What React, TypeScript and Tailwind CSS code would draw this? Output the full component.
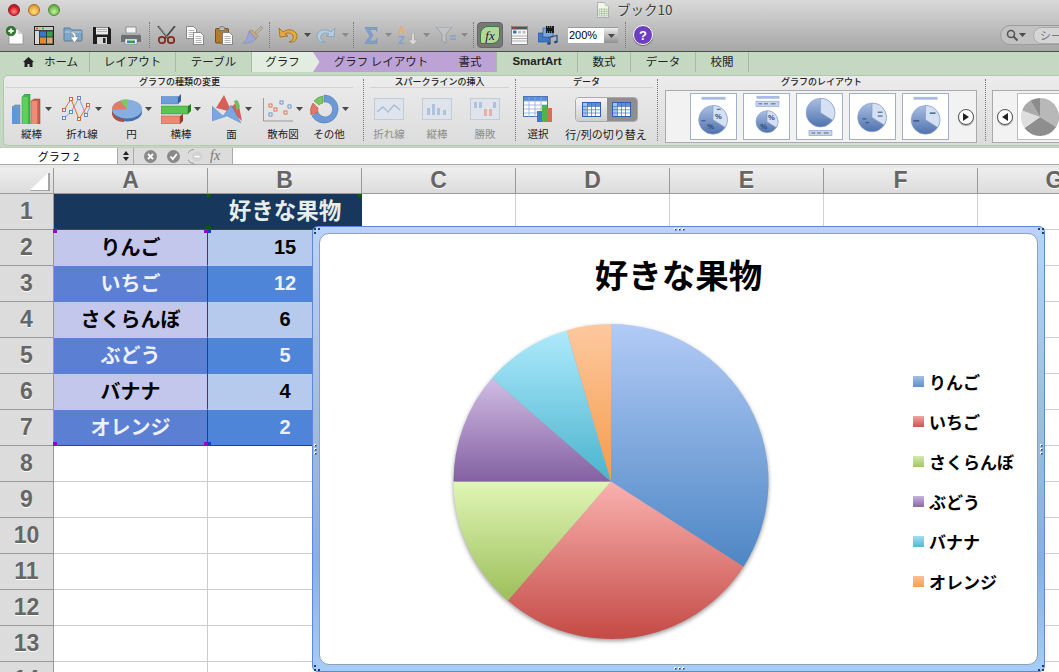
import React from "react";

const slices = [
  { v: 15, id: "s0", a: "#b2cbf6", b: "#4d86c4" },
  { v: 12, id: "s1", a: "#fab2b0", b: "#c44a45" },
  { v: 6, id: "s2", a: "#e0f6b6", b: "#9dbf5a" },
  { v: 5, id: "s3", a: "#d0bde4", b: "#8460a2" },
  { v: 4, id: "s4", a: "#aeeafc", b: "#4ab3ce" },
  { v: 2, id: "s5", a: "#fdc9a0", b: "#f69b4b" },
];

function wedge(cx: number, cy: number, r: number, from: number, to: number) {
  const p = (d: number) => {
    const t = ((d - 90) * Math.PI) / 180;
    return `${(cx + r * Math.cos(t)).toFixed(2)} ${(cy + r * Math.sin(t)).toFixed(2)}`;
  };
  return `M${cx} ${cy}L${p(from)}A${r} ${r} 0 ${to - from > 180 ? 1 : 0} 1 ${p(to)}Z`;
}

function Pie() {
  let acc = 0;
  const total = 44;
  return (
    <svg width="332" height="332" viewBox="0 0 332 332" className="shrink-0 drop-shadow-[0_2px_2px_rgba(0,0,0,0.4)]">
      <defs>
        {slices.map((s) => (
          <linearGradient key={s.id} id={s.id} x1="0" y1="0" x2="0" y2="1">
            <stop offset="0" stopColor={s.a} />
            <stop offset="1" stopColor={s.b} />
          </linearGradient>
        ))}
      </defs>
      {slices.map((s) => {
        const from = (acc / total) * 360;
        acc += s.v;
        const to = (acc / total) * 360;
        return <path key={s.id} d={wedge(166, 158.5, 157.5, from, to)} fill={`url(#${s.id})`} />;
      })}
    </svg>
  );
}

const Caret = ({ faded }: { faded?: boolean }) => (
  <svg width="7" height="4" viewBox="0 0 7 4" className="shrink-0">
    <path d="M0 0h7L3.5 4z" fill={faded ? "#8a8a8a" : "#4a4a4a"} />
  </svg>
);

const Sep = ({ cls }: { cls: string }) => <div className={`h-[26px] w-0 border-l border-dotted border-[#777] ${cls}`} />;

function NewIcon() {
  return (
    <svg width="18" height="19" viewBox="0 0 18 19">
      <path d="M3 3h9l5 5v10H3z" fill="#fbfbfb" stroke="#8a8a8a" strokeWidth=".7" />
      <path d="M12 3l5 5h-5z" fill="#d5d5d5" />
      <circle cx="5" cy="5" r="4.8" fill="#2f7d2a" stroke="#173f14" strokeWidth=".5" />
      <path d="M5 2.4v5.2M2.4 5h5.2" stroke="#fff" strokeWidth="1.8" />
    </svg>
  );
}
function GalleryIcon() {
  return (
    <svg width="20" height="19" viewBox="0 0 20 19">
      <rect x=".5" y=".5" width="19" height="18" fill="#3a3f46" stroke="#222" />
      <rect x="1" y="1" width="18" height="3" fill="#c9c9c9" />
      <circle cx="3" cy="2.5" r="1" fill="#d33" /><circle cx="6" cy="2.5" r="1" fill="#dc3" /><circle cx="9" cy="2.5" r="1" fill="#3a3" />
      <rect x="1" y="5" width="4" height="13" fill="#d8d8d8" />
      <rect x="6" y="5.5" width="6" height="5" fill="#2d7ccf" /><rect x="13" y="5.5" width="5.5" height="5" fill="#3aa24a" />
      <rect x="6" y="11.5" width="6" height="6" fill="#e38a2e" /><rect x="13" y="11.5" width="5.5" height="6" fill="#d9a96b" />
    </svg>
  );
}
function OpenIcon() {
  return (
    <svg width="20" height="18" viewBox="0 0 20 18">
      <path d="M1 2h6l2 2h9a1 1 0 0 1 1 1v9a1 1 0 0 1-1 1H2a1 1 0 0 1-1-1z" fill="#7ea6c9" stroke="#4d708f" strokeWidth=".8" />
      <path d="M1.5 6h17" stroke="#b6d0e6" />
      <path d="M7 6c4-.5 6 1.5 6 5h2.5l-4 6-4-6H11c0-2-1.5-3.5-4-5z" fill="#fff" stroke="#777" strokeWidth=".5" />
    </svg>
  );
}
function SaveIcon() {
  return (
    <svg width="18" height="18" viewBox="0 0 18 18">
      <path d="M0 1h16l2 2v15H0z" fill="#1e1e1e" />
      <rect x="3" y="1.5" width="12" height="7" fill="#e9e9e9" />
      <path d="M4 3.5h10M4 5.5h10" stroke="#999" strokeWidth=".7" />
      <rect x="4" y="11" width="10" height="7" fill="#d5d5d5" />
      <rect x="10" y="12" width="2.5" height="5" fill="#222" />
    </svg>
  );
}
function PrintIcon() {
  return (
    <svg width="20" height="19" viewBox="0 0 20 19">
      <path d="M5 1h10v6H5z" fill="#f4f4f4" stroke="#777" strokeWidth=".7" />
      <path d="M2 7h16l2 3v6H0v-6z" fill="#6c7074" />
      <path d="M2 7h16l1 2H1z" fill="#a8adb1" />
      <rect x="4" y="13" width="12" height="5" fill="#f5f5f5" stroke="#777" strokeWidth=".5" />
      <path d="M6 14.5h3v2.5h-3z" fill="#2f7fce" /><path d="M9 14.5h3v2.5H9z" fill="#3aa04a" /><path d="M12 14.5h2v2.5h-2z" fill="#2f7fce" />
    </svg>
  );
}
function CutIcon() {
  return (
    <svg width="19" height="18" viewBox="0 0 19 18">
      <path d="M1 0l10.5 13M18 0L7.5 13" stroke="#4a4a4a" strokeWidth="1.8" />
      <path d="M2 1l9 11" stroke="#c7c7c7" strokeWidth=".6" />
      <circle cx="5" cy="14" r="3.2" fill="none" stroke="#8a2c1d" strokeWidth="1.8" />
      <circle cx="14" cy="14" r="3.2" fill="none" stroke="#8a2c1d" strokeWidth="1.8" />
    </svg>
  );
}
const PageLines = ({ x, y }: { x: number; y: number }) => (
  <g>
    <path d={`M${x} ${y}h7l3 3v9h-10z`} fill="#fbfbfb" stroke="#666" strokeWidth=".7" />
    <path d={`M${x + 2} ${y + 4}h6M${x + 2} ${y + 6}h6M${x + 2} ${y + 8}h6M${x + 2} ${y + 10}h6`} stroke="#888" strokeWidth=".6" />
  </g>
);
function CopyIcon() {
  return (
    <svg width="18" height="19" viewBox="0 0 18 19">
      <PageLines x={0.5} y={0.5} />
      <PageLines x={7.5} y={6.5} />
    </svg>
  );
}
function PasteIcon() {
  return (
    <svg width="18" height="19" viewBox="0 0 18 19">
      <rect x=".5" y="2.5" width="13" height="14.5" rx="1" fill="#b27c30" stroke="#5c3f14" strokeWidth=".8" />
      <path d="M4 3.5c0-2 1-3 3-3s3 1 3 3v1H4z" fill="#bbb" stroke="#555" strokeWidth=".6" />
      <PageLines x={7.5} y={6.5} />
    </svg>
  );
}
function BrushIcon() {
  return (
    <svg width="20" height="18" viewBox="0 0 20 18">
      <path d="M12 6l6-6 2 2-6 6z" fill="#b9b3a5" stroke="#8d8779" strokeWidth=".5" />
      <path d="M6 5l3-1 6 6-2 3z" fill="#c9ab7a" stroke="#8f7a58" strokeWidth=".5" />
      <path d="M6 5l7 8c-3 3-8 4.5-13 4.5C3 15 5 10 6 5z" fill="#9da5d8" stroke="#7d84b3" strokeWidth=".5" />
    </svg>
  );
}
function ArrowIcon({ color, dark, flip }: { color: string; dark: string; flip?: boolean }) {
  return (
    <svg width="20" height="16" viewBox="0 0 20 16" className={flip ? "-scale-x-100" : ""}>
      <path d="M1 1l1 9 8-1-3-2c3-2 7-1 8 2s-1 5-4 6h4c4-2 5-6 3-9-3-4-9-4-13-1L2 2z" fill={color} stroke={dark} strokeWidth=".8" />
    </svg>
  );
}
function SigmaIcon() {
  return (
    <svg width="13" height="17" viewBox="0 0 13 17">
      <path d="M0 0h12v4.5l-1-2H4.5L8 8l-4 6h7l1-2.5V17H0v-1l5-7L0 1z" fill="#7fa0d0" stroke="#5d7fb3" strokeWidth=".4" />
    </svg>
  );
}
function SortIcon() {
  return (
    <div className="relative w-[20px] h-[19px] font-['Liberation_Sans',sans-serif] font-bold leading-none text-[11px]">
      <span className="absolute left-0 top-[-1px] text-[#e2b070]">A</span>
      <span className="absolute left-0 top-[9px] text-[#7f9fd0]">Z</span>
      <svg width="10" height="12" viewBox="0 0 10 12" className="absolute right-0 top-[7px]">
        <path d="M3.5 0h3v7H10l-5 5-5-5h3.5z" fill="#d8d8d8" stroke="#9c9c9c" strokeWidth=".6" />
      </svg>
    </div>
  );
}
function FilterIcon() {
  return (
    <svg width="21" height="17" viewBox="0 0 21 17">
      <path d="M0 0h16L10 7v9l-4-2V7z" fill="#bfc4c8" stroke="#8f9498" strokeWidth=".7" />
      <path d="M14 9h6M14 12h6" stroke="#7fa0d0" strokeWidth="1.6" />
    </svg>
  );
}
function SheetIcon() {
  return (
    <svg width="17" height="19" viewBox="0 0 17 19">
      <rect x=".5" y=".5" width="16" height="18" fill="#f8f8f8" stroke="#666" strokeWidth=".7" />
      <rect x="1" y="1" width="15" height="2.5" fill="#555" />
      <rect x="2" y="4.5" width="3.5" height="3" fill="#3e73c4" /><rect x="7" y="5" width="3" height="2.5" fill="#bbb" /><rect x="11.5" y="5" width="3" height="2.5" fill="#bbb" />
      <path d="M1 10h15M1 12.5h15M1 15h15" stroke="#999" strokeWidth=".8" />
      <circle cx="3" cy="2" r="1.2" fill="#d33" />
    </svg>
  );
}
function MediaIcon() {
  return (
    <svg width="20" height="19" viewBox="0 0 20 19">
      <rect x="0" y="7" width="11" height="9" fill="#3f78c4" stroke="#234d87" strokeWidth=".6" />
      <rect x="5" y="2" width="10" height="9" fill="#7ba6dc" stroke="#234d87" strokeWidth=".6" />
      <rect x="8" y="0" width="8" height="7" fill="#15191e" />
      <path d="M9 1h1M11 1h1M13 1h1M9 6h1M11 6h1M13 6h1" stroke="#ddd" strokeWidth=".8" />
      <path d="M12 11l7-1.5V16" stroke="#234d87" fill="none" strokeWidth="1.2" />
      <path d="M12 11v6.5" stroke="#234d87" strokeWidth="1.2" />
      <ellipse cx="10.8" cy="17.5" rx="1.8" ry="1.3" fill="#234d87" /><ellipse cx="17.8" cy="16" rx="1.8" ry="1.3" fill="#234d87" />
    </svg>
  );
}

function ToolIcon({ cls, children }: { cls: string; children: React.ReactNode }) {
  return <div className={`flex items-center shrink-0 ${cls}`}>{children}</div>;
}

const grad = "[background:linear-gradient(#d9d9d9,#a7a7a7)]";

function Header() {
  return (
    <div className={`h-[52px] border-b border-[#4f4f4f] ${grad} flex flex-col`}>
      <div className="h-[19px] flex items-center pl-[8px] gap-[8px] shrink-0">
        <span className="w-[12px] h-[12px] rounded-full border border-[#8a1c1c] [background:radial-gradient(circle_at_50%_65%,#ff8a8a,#d5202b_55%,#8f1b20)]" />
        <span className="w-[12px] h-[12px] rounded-full border border-[#a5701e] [background:radial-gradient(circle_at_50%_65%,#ffe08a,#e9a63a_60%,#b57a22)]" />
        <span className="w-[12px] h-[12px] rounded-full border border-[#4f8a30] [background:radial-gradient(circle_at_50%_65%,#c8f0a5,#71b950_60%,#4d8c34)]" />
        <svg width="12" height="16" viewBox="0 0 12 16" className="ml-[529px]">
          <path d="M.5.5h7l4 4v11H.5z" fill="#f5f5f0" stroke="#9a9a9a" strokeWidth=".7" />
          <path d="M7.5.5l4 4h-4z" fill="#cfe0bf" />
          <path d="M2 7h8v7H2zM2 9.3h8M2 11.6h8M4.7 7v7M7.3 7v7" fill="none" stroke="#8fb37a" strokeWidth=".6" />
        </svg>
        <span className="text-[13.5px] text-[#3f3f3f] leading-none [text-shadow:0_1px_0_rgba(255,255,255,0.4)]">ブック10</span>
      </div>
      <div className="h-[32px] flex items-center shrink-0 relative">
        <ToolIcon cls="ml-[6px]"><NewIcon /></ToolIcon>
        <ToolIcon cls="ml-[10px]"><GalleryIcon /></ToolIcon>
        <ToolIcon cls="ml-[9px]"><OpenIcon /></ToolIcon>
        <ToolIcon cls="ml-[10px]"><SaveIcon /></ToolIcon>
        <ToolIcon cls="ml-[10px]"><PrintIcon /></ToolIcon>
        <Sep cls="ml-[8px]" />
        <ToolIcon cls="ml-[7px]"><CutIcon /></ToolIcon>
        <ToolIcon cls="ml-[10px]"><CopyIcon /></ToolIcon>
        <ToolIcon cls="ml-[11px]"><PasteIcon /></ToolIcon>
        <ToolIcon cls="ml-[10px]"><BrushIcon /></ToolIcon>
        <Sep cls="ml-[6px]" />
        <ToolIcon cls="ml-[8px]"><ArrowIcon color="#e9a93c" dark="#9a6a18" /></ToolIcon>
        <ToolIcon cls="ml-[6px]"><Caret /></ToolIcon>
        <ToolIcon cls="ml-[5px]"><ArrowIcon flip color="#b4cde0" dark="#7fa0b8" /></ToolIcon>
        <ToolIcon cls="ml-[6px]"><Caret faded /></ToolIcon>
        <Sep cls="ml-[4px]" />
        <ToolIcon cls="ml-[11px]"><SigmaIcon /></ToolIcon>
        <ToolIcon cls="ml-[7px]"><Caret faded /></ToolIcon>
        <ToolIcon cls="ml-[6px]"><SortIcon /></ToolIcon>
        <ToolIcon cls="ml-[5px]"><Caret faded /></ToolIcon>
        <ToolIcon cls="ml-[6px]"><FilterIcon /></ToolIcon>
        <ToolIcon cls="ml-[4px]"><Caret faded /></ToolIcon>
        <Sep cls="ml-[5px]" />
        <div className="ml-[3px] w-[26px] h-[26px] rounded-[4px] bg-[#777] border border-[#666] flex items-center justify-center shrink-0">
          <div className="w-[20px] h-[18px] rounded-tl-[8px] rounded-br-[8px] rounded-tr-[2px] rounded-bl-[2px] bg-[#b3d79b] border border-[#3c7a3c] flex items-center justify-center font-['Liberation_Serif',serif] italic text-[13px] leading-none text-[#123]">fx</div>
        </div>
        <ToolIcon cls="ml-[8px]"><SheetIcon /></ToolIcon>
        <ToolIcon cls="ml-[10px]"><MediaIcon /></ToolIcon>
        <div className="ml-[10px] w-[50px] h-[16px] flex shrink-0 border-t border-[#999]">
          <div className="w-[36px] bg-white text-[11px] leading-[15px] text-black pl-[1px] font-['Liberation_Sans',sans-serif]">200%</div>
          <div className="w-[14px] [background:linear-gradient(#ececec,#8f8f8f)] flex items-center justify-center"><Caret /></div>
        </div>
        <Sep cls="ml-[7px]" />
        <div className="ml-[7px] w-[20px] h-[20px] rounded-full bg-[#6d3fc0] border border-white flex items-center justify-center text-white font-bold text-[13px] leading-none font-['Liberation_Sans',sans-serif] shadow-[0_1px_1px_rgba(0,0,0,0.4)] shrink-0">?</div>
        <div className="ml-[347px] w-[70px] h-[20px] rounded-l-full border border-[#9c9c9c] bg-[#c2c2c2] flex items-center pl-[5px] shrink-0 gap-[1px]">
          <svg width="12" height="12" viewBox="0 0 12 12"><circle cx="5" cy="5" r="3.5" fill="none" stroke="#555" strokeWidth="1.6" /><path d="M7.5 7.5L11.5 11.5" stroke="#555" strokeWidth="2" /></svg>
          <Caret />
          <div className="ml-[6px] flex-1 h-[17px] rounded-l-full border border-[#aaa] bg-[#d5d5d5] pl-[6px] text-[11px] leading-[15px] text-[#777] whitespace-nowrap overflow-hidden">シー</div>
        </div>
      </div>
    </div>
  );
}

const tabs = [
  { w: "w-[88px] pl-[10px]", t: "ホーム", home: true },
  { w: "w-[86px]", t: "レイアウト" },
  { w: "w-[76px]", t: "テーブル" },
];
const tabs2 = [
  { w: "w-[81px]", t: "SmartArt" },
  { w: "w-[53px]", t: "数式" },
  { w: "w-[65px]", t: "データ" },
  { w: "w-[53px]", t: "校閲" },
];

function Tabs() {
  const cell = "h-[20px] flex items-center justify-center border-r border-[#a3bb9f] text-[11.5px] text-[#222] shrink-0";
  return (
    <div className="h-[20px] flex bg-[#c5d8c2] pl-[2px] relative shrink-0">
      {tabs.map((t) => (
        <div key={t.t} className={`${cell} ${t.w} gap-[10px]`}>
          {t.home && (
            <svg width="11" height="10" viewBox="0 0 11 10"><path d="M5.5 0L11 5H9.5v5H6.5V7h-2v3H1.5V5H0z" fill="#222" /></svg>
          )}
          {t.t}
        </div>
      ))}
      <div className={`${cell} w-[61px] bg-[#e3ece1] border-r-0`}>グラフ</div>
      <div className={`${cell} w-[131px] bg-[#bda2d6] pl-[6px]`}>グラフ レイアウト</div>
      <div className={`${cell} w-[53px] bg-[#bda2d6]`}>書式</div>
      {tabs2.map((t) => (
        <div key={t.t} className={`${cell} ${t.w} ${t.t === "SmartArt" ? "font-['Liberation_Sans',sans-serif] font-bold" : ""}`}>{t.t}</div>
      ))}
      <svg width="7" height="20" viewBox="0 0 7 20" className="absolute left-[313px] top-0">
        <path d="M0 0L6.5 10 0 20z" fill="#e3ece1" />
      </svg>
    </div>
  );
}

function ColumnIcon() {
  return (
    <svg width="30" height="30" viewBox="0 0 30 30">
      <path d="M0 13l3-2h5v19H0z" fill="#6f9fdc" stroke="#3f6da8" strokeWidth=".5" />
      <rect x=".5" y="13" width="6" height="17" fill="#5f97da" />
      <path d="M10 3l3-3h5v30h-8z" fill="#46b84a" stroke="#2a7a2c" strokeWidth=".5" />
      <rect x="10.3" y="3" width="5.5" height="27" fill="#5fcf5f" />
      <path d="M19 7l3-2h6v25h-9z" fill="#c95f4c" stroke="#93402f" strokeWidth=".5" />
      <rect x="19.3" y="7" width="6" height="23" fill="#ec8b78" />
    </svg>
  );
}
function LineIcon() {
  const s = (x: number, y: number, c: string) => <rect x={x - 1.5} y={y - 1.5} width="3" height="3" fill="#f2f2f2" stroke={c} strokeWidth=".9" />;
  return (
    <svg width="30" height="30" viewBox="0 0 30 30">
      <path d="M2 24L9 18 17 4 24 21 28 13" fill="none" stroke="#7ea2d6" strokeWidth="1" />
      <path d="M2 16L9 5 17 25 26 11" fill="none" stroke="#dc6a3a" strokeWidth="1" />
      {s(2, 24, "#4f7fc0")}{s(9, 18, "#4f7fc0")}{s(17, 4, "#4f7fc0")}{s(24, 21, "#4f7fc0")}
      {s(9, 5, "#d8562e")}{s(2, 16, "#d8562e")}{s(17, 25, "#d8562e")}{s(26, 11, "#d8562e")}
    </svg>
  );
}
function PieIcon() {
  return (
    <svg width="30" height="30" viewBox="0 0 30 30">
      <ellipse cx="15" cy="18" rx="15" ry="9.5" fill="#4572ad" />
      <ellipse cx="15" cy="15" rx="15" ry="9.5" fill="#86aee0" />
      <path d="M15 15L0 16c0-5 4-8 8-9z" fill="#e27a66" />
      <path d="M15 15L8 6.5c2-1 5-1.2 7-1z" fill="#7cc95e" />
      <path d="M0 16c1 6 7 9 12 9 0 1 0 3 0 3-6 0-12-3-12-9z" fill="#b04d3c" />
    </svg>
  );
}
function HBarIcon() {
  return (
    <svg width="30" height="30" viewBox="0 0 30 30">
      <path d="M0 3h17l3-3v7l-3 3H0z" fill="#345f9c" /><rect x="0" y="2.5" width="17" height="7.5" fill="#6d9ddb" stroke="#3f6da8" strokeWidth=".4" />
      <path d="M0 12h27l3-2v7l-3 3H0z" fill="#2a7a2c" /><rect x="0" y="12" width="27" height="8" fill="#58c651" stroke="#2a7a2c" strokeWidth=".4" />
      <path d="M0 22h19l3-2v7l-3 3H0z" fill="#93402f" /><rect x="0" y="22" width="19" height="8" fill="#ea8a76" stroke="#93402f" strokeWidth=".4" />
    </svg>
  );
}
function AreaIcon() {
  return (
    <svg width="30" height="30" viewBox="0 0 30 30">
      <path d="M4 14L12 1l6 13 8-7 4 20L20 18z" fill="#d75f57" />
      <path d="M22 7l3-1 3 6-3 5z" fill="#69c05e" />
      <path d="M0 12l11 10 8-11 10 18L15 22 0 27z" fill="#7ba7e0" stroke="#5680ba" strokeWidth=".4" />
    </svg>
  );
}
function ScatterIcon() {
  const s = (x: number, y: number, c: string) => <rect key={`${x}${y}`} x={x} y={y} width="3" height="3" fill="#f4f4f4" stroke={c} strokeWidth=".8" />;
  return (
    <svg width="30" height="30" viewBox="0 0 30 30">
      <path d="M.5 4v23H30" fill="none" stroke="#888" strokeWidth=".8" />
      {s(6, 10, "#d8562e")}{s(17, 7, "#4f7fc0")}{s(25, 11, "#4f7fc0")}{s(11, 14, "#d8562e")}{s(6, 19, "#4f7fc0")}{s(21, 17, "#d8562e")}
    </svg>
  );
}
function DonutIcon() {
  return (
    <svg width="30" height="30" viewBox="0 0 30 30">
      <path d="M15 1a14 14 0 1 1-12 21l6-4a7.5 7.5 0 1 0 6-10z" fill="#6d9ad6" stroke="#476fa8" strokeWidth=".5" />
      <path d="M2 21A14 14 0 0 1 4 9l5 5a7.5 7.5 0 0 0 0 4z" fill="#e4786a" stroke="#a84b3e" strokeWidth=".5" />
      <path d="M5 7a14 14 0 0 1 9-5l0 7a8 8 0 0 0-4 2z" fill="#78c75e" stroke="#4a8e36" strokeWidth=".5" />
    </svg>
  );
}

function RBtn({ w, label, children }: { w: string; label: string; children: React.ReactNode }) {
  return (
    <div className={`${w} flex flex-col items-center shrink-0`}>
      <div className="h-[30px] flex items-center gap-[3px]">{children}<Caret /></div>
      <div className="mt-[3px] text-[10.5px] leading-[14px] text-[#222] whitespace-nowrap">{label}</div>
    </div>
  );
}
function Spark({ w, label, children }: { w: string; label: string; children: React.ReactNode }) {
  return (
    <div className={`${w} flex flex-col items-center shrink-0`}>
      <div className="h-[30px] flex items-center"><svg width="30" height="22" viewBox="0 0 30 22">
        <rect x=".5" y=".5" width="29" height="21" fill="#dfe4ec" stroke="#c0cbdb" />{children}
      </svg></div>
      <div className="mt-[3px] text-[10.5px] leading-[14px] text-[#8d8d8d] whitespace-nowrap">{label}</div>
    </div>
  );
}
function GroupTitle({ cls, t }: { cls: string; t: string }) {
  return <div className={`h-[12px] text-center text-[9px] font-medium leading-[11px] text-[#222] border-b border-[#d2d2d2] ${cls}`}>{t}</div>;
}
const VSep = ({ cls = "" }: { cls?: string }) => <div className={`w-0 h-[62px] border-l border-dotted border-[#777] shrink-0 ${cls}`} />;

function GridGlyph({ w, h }: { w: number; h: number }) {
  return (
    <svg width={w} height={h} viewBox="0 0 19 15">
      <rect x=".5" y=".5" width="18" height="14" fill="#fff" stroke="#2f5fb3" />
      <rect x="1" y="1" width="17" height="3.3" fill="#5b8fdc" /><rect x="1" y="1" width="4" height="13" fill="#a8c2ea" />
      <path d="M1 4.5h17M1 7.8h17M1 11h17M5.5 1v13M9.5 1v13M13.5 1v13" stroke="#4270bd" strokeWidth=".7" />
    </svg>
  );
}

function ThumbPie({ cx, cy, r }: { cx: number; cy: number; r: number }) {
  return (
    <g>
      <circle cx={cx} cy={cy} r={r} fill="url(#tb)" stroke="#8aa3cc" strokeWidth=".6" />
      <path d={wedge(cx, cy, r, 0, 122)} fill="#d5e1f3" stroke="#7b96c4" strokeWidth=".6" />
    </g>
  );
}
function Thumb({ n }: { n: number }) {
  const bar = <rect x="11" y="3" width="25" height="3" fill="#a8bce2" />;
  const leg = (y: number) => (
    <g>
      <rect x="12.5" y={y} width="24" height="5.5" fill="#c7d5ef" stroke="#7a98d6" strokeWidth=".6" />
      <path d={`M15 ${y + 2.75}h4M21 ${y + 2.75}h4M28 ${y + 2.75}h5`} stroke="#456" strokeWidth=".9" />
    </g>
  );
  const pct = (x: number, y: number) => <text x={x} y={y} fontSize="8" fontWeight="700" fill="#2c4a78" fontFamily="Liberation Sans">%</text>;
  return (
    <div className="w-[47px] h-[47px] bg-white border border-[#9fb0c8] shrink-0">
      <svg width="45" height="45" viewBox="0 0 47 47">
        {n === 0 && <g>{bar}<ThumbPie cx={23} cy={27} r={15} />{pct(25, 26)}{pct(17, 37)}<path d="M11 28h4M27 16h4" stroke="#2c4a78" /></g>}
        {n === 1 && <g><rect x="13" y="2" width="24" height="3" fill="#a8bce2" />{leg(7.5)}<ThumbPie cx={24} cy={29} r={11.5} />{pct(25, 27)}{pct(17, 37)}</g>}
        {n === 2 && <g><ThumbPie cx={24.5} cy={19.5} r={15} />{leg(38)}</g>}
        {n === 3 && <g><ThumbPie cx={23} cy={24.5} r={15} /><path d="M29 19h5M29 23h5M13 26h4M16 30h4" stroke="#2c4a78" /></g>}
        {n === 4 && <g>{bar}<ThumbPie cx={23.5} cy={27} r={15} /><path d="M11 28h6M28 20h6" stroke="#2c4a78" strokeWidth="1.2" /></g>}
      </svg>
    </div>
  );
}
const Circle = ({ dir }: { dir: "l" | "r" }) => (
  <div className="w-[16px] h-[16px] rounded-full border border-[#555] bg-white flex items-center justify-center shrink-0 shadow-[0_1px_1px_rgba(0,0,0,0.3)]">
    <svg width="6" height="8" viewBox="0 0 6 8"><path d={dir === "r" ? "M0 0l6 4-6 4z" : "M6 0L0 4l6 4z"} fill="#222" /></svg>
  </div>
);

function Ribbon() {
  return (
    <div className="h-[76px] bg-[#c5d8c2] pt-[3px] pl-[3px] pb-[2px] border-b border-[#bcd0b8] shrink-0">
      <div className="h-[71px] rounded-l-[5px] [background:linear-gradient(#ececec,#dcdcdc)] border border-[#b4c8b0] border-r-0 flex items-start overflow-hidden">
        <svg width="0" height="0" className="absolute">
          <defs>
            <linearGradient id="tb" x1="0" y1="0" x2="0" y2="1"><stop offset="0" stopColor="#a9bfe3" /><stop offset="1" stopColor="#4f72ad" /></linearGradient>
          </defs>
        </svg>
        {/* chart type group */}
        <div className="w-[358px] shrink-0 flex flex-col pl-[2px]">
          <GroupTitle cls="mr-[9px]" t="グラフの種類の変更" />
          <div className="flex pt-[6px]">
            <RBtn w="w-[51px]" label="縦棒"><ColumnIcon /></RBtn>
            <RBtn w="w-[50px]" label="折れ線"><LineIcon /></RBtn>
            <RBtn w="w-[49px]" label="円"><PieIcon /></RBtn>
            <RBtn w="w-[50px]" label="横棒"><HBarIcon /></RBtn>
            <RBtn w="w-[51px]" label="面"><AreaIcon /></RBtn>
            <RBtn w="w-[52px]" label="散布図"><ScatterIcon /></RBtn>
            <RBtn w="w-[40px]" label="その他"><DonutIcon /></RBtn>
          </div>
        </div>
        <VSep cls="mt-[3px] ml-[1px]" />
        {/* sparkline group */}
        <div className="w-[151px] shrink-0 flex flex-col">
          <GroupTitle cls="mx-[6px]" t="スパークラインの挿入" />
          <div className="flex pt-[6px] pl-[1px]">
            <Spark w="w-[48px]" label="折れ線"><path d="M3 14l6-5 5 5 6-7 6 5" fill="none" stroke="#a6bcd8" strokeWidth="1.3" /></Spark>
            <Spark w="w-[48px]" label="縦棒"><path d="M5 10h3v7H5zM10 6h3v11h-3zM15 10h3v7h-3zM21 12h3v5h-3z" fill="#aec2dd" /></Spark>
            <Spark w="w-[48px]" label="勝敗"><path d="M4 4h3v6H4zM9 4h3v6H9zM23 4h3v6h-3z" fill="#aec2dd" /><path d="M14 11h3v7h-3zM19 11h3v7h-3z" fill="#e6b1a4" /></Spark>
          </div>
        </div>
        <VSep cls="mt-[3px]" />
        {/* data group */}
        <div className="w-[141px] shrink-0 flex flex-col">
          <GroupTitle cls="mx-[4px]" t="データ" />
          <div className="flex pt-[6px]">
            <div className="w-[44px] flex flex-col items-center shrink-0">
              <div className="h-[30px] flex items-center">
                <svg width="30" height="26" viewBox="0 0 30 26">
                  <rect x=".5" y=".5" width="24" height="20" fill="#fff" stroke="#4d74b5" />
                  <rect x="1" y="1" width="23" height="4" fill="#5b8fdc" />
                  <path d="M1 5h23M1 9h23M1 13h23M1 17h23M6 1v20M12 1v20M18 1v20" stroke="#8dabd8" strokeWidth=".8" />
                  <rect x="14" y="15" width="5" height="11" fill="#3d7cc9" /><rect x="19" y="9" width="5" height="17" fill="#4cb648" /><rect x="24" y="12" width="5" height="14" fill="#dd6a52" />
                </svg>
              </div>
              <div className="mt-[3px] text-[10.5px] leading-[14px] text-[#222]">選択</div>
            </div>
            <div className="w-[92px] flex flex-col items-center shrink-0">
              <div className="h-[30px] flex items-center">
                <div className="w-[63px] h-[25px] rounded-[4px] flex overflow-hidden border border-[#aaa]">
                  <div className="w-[31px] [background:linear-gradient(#f4f4f4,#cfcfcf)] flex items-center justify-center"><GridGlyph w={19} h={15} /></div>
                  <div className="flex-1 bg-[#8e8e8e] flex items-center justify-center"><GridGlyph w={19} h={15} /></div>
                </div>
              </div>
              <div className="mt-[3px] text-[11px] leading-[14px] text-[#222] whitespace-nowrap">行/列の切り替え</div>
            </div>
          </div>
        </div>
        <VSep cls="mt-[3px]" />
        {/* layout group */}
        <div className="w-[327px] shrink-0 flex flex-col items-stretch">
          <div className="h-[14px] text-center text-[9px] font-medium leading-[11px] text-[#222]">グラフのレイアウト</div>
          <div className="ml-[7px] mr-[8px] h-[53px] border border-[#aaa] bg-[#f2f2f2] flex items-center pl-[24px] gap-[6px]">
            {[0, 1, 2, 3, 4].map((n) => <Thumb key={n} n={n} />)}
            <div className="ml-[3px]"><Circle dir="r" /></div>
          </div>
        </div>
        <VSep cls="mt-[3px]" />
        {/* style group */}
        <div className="ml-[6px] mt-[14px] w-[80px] h-[53px] border border-[#aaa] bg-[#f2f2f2] flex items-center pl-[4px] shrink-0">
          <Circle dir="l" />
          <div className="ml-[4px] w-[60px] h-[47px] bg-white border border-[#bbb] flex items-center pl-[2px] shrink-0">
            <svg width="40" height="40" viewBox="0 0 40 40">
              <path d={wedge(20, 20, 19, 0, 122)} fill="#b8b8b8" />
              <path d={wedge(20, 20, 19, 122, 235)} fill="#8e8e8e" />
              <path d={wedge(20, 20, 19, 235, 290)} fill="#dedede" />
              <path d={wedge(20, 20, 19, 290, 330)} fill="#aaaaaa" />
              <path d={wedge(20, 20, 19, 330, 360)} fill="#8c8c8c" />
            </svg>
          </div>
        </div>
      </div>
    </div>
  );
}

function Formula() {
  return (
    <div className="h-[17px] flex bg-white border-b border-[#a8a8a8] shrink-0">
      <div className="w-[117px] text-center text-[11px] leading-[16px] text-black shrink-0">グラフ 2</div>
      <div className="w-[17px] bg-[#dcdcdc] border-l border-r border-[#aaa] flex flex-col items-center justify-center gap-[2px] shrink-0">
        <svg width="6" height="4" viewBox="0 0 6 4"><path d="M3 0l3 4H0z" fill="#222" /></svg>
        <svg width="6" height="4" viewBox="0 0 6 4"><path d="M0 0h6L3 4z" fill="#222" /></svg>
      </div>
      <div className="w-[99px] bg-[#dcdcdc] border-r border-[#aaa] flex items-center pl-[10px] shrink-0">
        <svg width="13" height="13" viewBox="0 0 13 13"><circle cx="6.5" cy="6.5" r="6.5" fill="#8a8a8a" /><path d="M4 4l5 5M9 4l-5 5" stroke="#fff" strokeWidth="1.8" /></svg>
        <svg width="13" height="13" viewBox="0 0 13 13" className="ml-[10px]"><circle cx="6.5" cy="6.5" r="6.5" fill="#8a8a8a" /><path d="M3.5 6.5l2.3 2.5 4-5" fill="none" stroke="#fff" strokeWidth="1.8" /></svg>
        <svg width="16" height="15" viewBox="0 0 16 15" className="ml-[8px]"><path d="M6 .5a7 7 0 0 0 0 14" fill="none" stroke="#999" /><circle cx="9" cy="7.5" r="5" fill="#d2d2d2" /><path d="M6.5 7.5h5" stroke="#fff" strokeWidth="1.5" /></svg>
        <span className="ml-[6px] font-['Liberation_Serif',serif] italic text-[14px] leading-none text-[#777]">fx</span>
      </div>
    </div>
  );
}

const cols = ["A", "B", "C", "D", "E", "F", "G"];
const rowsData: Record<number, { a: string; b: string; dark: boolean }> = {
  2: { a: "りんご", b: "15", dark: false },
  3: { a: "いちご", b: "12", dark: true },
  4: { a: "さくらんぼ", b: "6", dark: false },
  5: { a: "ぶどう", b: "5", dark: true },
  6: { a: "バナナ", b: "4", dark: false },
  7: { a: "オレンジ", b: "2", dark: true },
};
const hdrText = "font-['Liberation_Sans',sans-serif] font-bold text-[23px] text-[#666] [text-shadow:0_1px_0_#fff]";

function Sheet() {
  const rows = Array.from({ length: 14 }, (_, i) => i + 1);
  return (
    <div className="flex flex-col">
      <div className="h-[3px] bg-[#e8e8e8]" />
      <div className="h-[26px] flex border-b border-[#999] [background:linear-gradient(#eeeeee,#dcdcdc)] shrink-0">
        <div className="w-[54px] border-r border-[#999] shrink-0 flex items-end justify-end pr-[3px] pb-[2px]">
          <svg width="21" height="19" viewBox="0 0 21 19"><path d="M0 19L20 0v19z" fill="#fff" /><path d="M20 1v18H1" fill="none" stroke="#8a8a8a" strokeWidth="1.5" /></svg>
        </div>
        {cols.map((c) => (
          <div key={c} className={`w-[154px] shrink-0 border-r border-[#999] flex items-center justify-center ${hdrText}`}>{c}</div>
        ))}
      </div>
      {rows.map((r) => {
        const d = rowsData[r];
        const text = d ? (d.dark ? "text-[#eef0fb]" : "text-black") : "";
        const borderA = r === 1 || r === 7 ? "border-b-[#9900cc]" : "border-b-transparent";
        const borderB = r === 1 || r === 7 ? "border-b-[#0044cc]" : "border-b-transparent";
        return (
          <div key={r} className="h-[36px] flex shrink-0">
            <div className={`w-[54px] shrink-0 bg-[#dcdcdc] border-r border-b border-[#999] flex items-center justify-center ${hdrText}`}>{r}</div>
            {r === 1 ? (
              <>
                <div className={`w-[154px] shrink-0 bg-[#17375d] border-b border-r border-r-[#17375d] ${borderA}`} />
                <div className={`w-[154px] shrink-0 bg-[#17375d] border-b flex items-center justify-center pb-[3px] text-[22.5px] font-bold text-[#e6edea] ${borderB}`}>好きな果物</div>
              </>
            ) : d ? (
              <>
                <div className={`w-[154px] shrink-0 border-b border-r border-r-[#0044cc] flex items-center justify-center pb-[2px] text-[20px] font-bold ${text} ${d.dark ? "bg-[#5b7fd3]" : "bg-[#c3c7ec]"} ${borderA}`}>{d.a}</div>
                <div className={`w-[154px] shrink-0 border-b flex items-center justify-center pb-[1px] text-[20px] font-bold font-['Liberation_Sans','Noto_Sans_CJK_JP',sans-serif] ${text} ${d.dark ? "bg-[#4e85d8]" : "bg-[#b6caed]"} ${borderB}`}>{d.b}</div>
              </>
            ) : (
              <>
                <div className="w-[154px] shrink-0 border-b border-r border-[#ccc]" />
                <div className="w-[154px] shrink-0 border-b border-r border-[#ccc]" />
              </>
            )}
            {cols.slice(2).map((c) => (
              <div key={c} className="w-[154px] shrink-0 border-b border-r border-[#d0d0d0]" />
            ))}
          </div>
        );
      })}
    </div>
  );
}

const Dots = ({ cls, v }: { cls: string; v?: boolean }) => (
  <svg width={v ? 4 : 12} height={v ? 12 : 4} viewBox={v ? "0 0 4 12" : "0 0 12 4"} className={`absolute ${cls}`}>
    {[0, 4, 8].map((p) => (
      <g key={p}>
        <rect x={v ? 0 : p} y={v ? p : 0} width="2" height="2" fill="#fff" />
        <rect x={v ? 1 : p + 1} y={v ? p + 1 : 1} width="1.5" height="1.5" fill="#1d3f78" />
      </g>
    ))}
  </svg>
);
const Corner = ({ cls }: { cls: string }) => (
  <svg width="7" height="7" viewBox="0 0 7 7" className={`absolute ${cls}`}>
    <path d="M0 0h2v2H0zM4 0h2v2H4zM0 4h2v2H0z" fill="#1d3f78" />
  </svg>
);

const legend = [
  { t: "りんご", c: "bg-[linear-gradient(#a6c0e6,#5f8fc8)]" },
  { t: "いちご", c: "bg-[linear-gradient(#f3a5a3,#c9544f)]" },
  { t: "さくらんぼ", c: "bg-[linear-gradient(#d4ecaa,#a3c464)]" },
  { t: "ぶどう", c: "bg-[linear-gradient(#c6b4de,#8a68a8)]" },
  { t: "バナナ", c: "bg-[linear-gradient(#a2e0f2,#52b8d2)]" },
  { t: "オレンジ", c: "bg-[linear-gradient(#fdc096,#f79f52)]" },
];

function Chart() {
  return (
    <div className="absolute left-[312px] top-[226px] w-[733px] h-[446px] rounded-[6px] border border-[#5f86d8] p-[6px] [background:linear-gradient(#b9d3fa,#a0bcdc_45%,#86b0e8_75%,#a6cdf6)]">
      <div className="w-full h-full bg-white rounded-[10px] border border-[#8e9fb8] flex flex-col overflow-hidden">
        <div className="h-[62px] shrink-0 flex items-end justify-center text-[33.5px] leading-[44px] font-bold text-black">好きな果物</div>
        <div className="flex mt-[27px]">
          <div className="ml-[125px]"><Pie /></div>
          <div className="ml-[136px] flex flex-col gap-[11px] mt-[44px]">
            {legend.map((l) => (
              <div key={l.t} className="h-[29px] flex items-center whitespace-nowrap">
                <span className={`w-[11px] h-[11px] shrink-0 ${l.c}`} />
                <span className="ml-[5px] text-[17px] font-bold leading-none text-black">{l.t}</span>
              </div>
            ))}
          </div>
        </div>
      </div>
      <Corner cls="left-[1px] top-[1px]" />
      <Corner cls="right-[0px] top-[1px] -scale-x-100" />
      <Corner cls="left-[1px] bottom-[0px] -scale-y-100" />
      <Corner cls="right-[0px] bottom-[0px] rotate-180" />
      <Dots v cls="left-[1px] top-[217px]" />
      <Dots v cls="right-[0px] top-[217px]" />
      <Dots cls="left-[361px] bottom-[0px]" />
      <Dots cls="left-[361px] top-[1px]" />
    </div>
  );
}

const Handle = ({ cls }: { cls: string }) => <span className={`absolute ${cls}`} />;

export default function App() {
  return (
    <div className="relative w-[1059px] h-[672px] overflow-hidden bg-white flex flex-col font-['Noto_Sans_CJK_JP','Liberation_Sans',sans-serif]">
      <Header />
      <Tabs />
      <Ribbon />
      <Formula />
      <Sheet />
      <Handle cls="left-[53px] top-[229px] w-[4px] h-[4px] bg-[#9900cc]" />
      <Handle cls="left-[204px] top-[229px] w-[4px] h-[4px] bg-[#9900cc]" />
      <Handle cls="left-[208px] top-[229px] w-[3px] h-[4px] bg-[#0044cc]" />
      <Handle cls="left-[53px] top-[442px] w-[4px] h-[4px] bg-[#9900cc]" />
      <Handle cls="left-[204px] top-[442px] w-[4px] h-[4px] bg-[#9900cc]" />
      <Handle cls="left-[208px] top-[442px] w-[3px] h-[4px] bg-[#0044cc]" />
      <Handle cls="left-[206px] top-[194px] w-[5px] h-[3px] bg-[#0a5c0a]" />
      <Handle cls="left-[206px] top-[226px] w-[5px] h-[3px] bg-[#0a5c0a]" />
      <Handle cls="left-[357px] top-[194px] w-[5px] h-[3px] bg-[#0a5c0a]" />
      <Chart />
    </div>
  );
}
